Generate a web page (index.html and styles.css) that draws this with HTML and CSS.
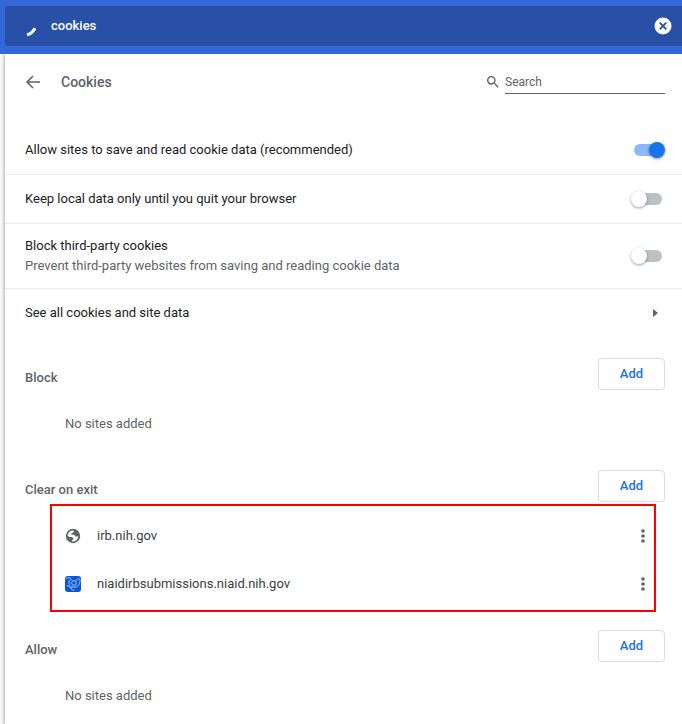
FILE: index.html
```html
<!DOCTYPE html>
<html lang="en">
<head>
<meta charset="utf-8">
<title>Settings - Cookies</title>
<link rel="stylesheet" href="styles.css">
</head>
<body>
<header class="toolbar">
  <form class="toolbar-search">
    <svg class="spinner" viewBox="0 0 12 12" aria-hidden="true"><path d="M2 9.800C5.400 9.200 8.200 6.400 10 3.200"/></svg>
    <input class="toolbar-input" type="text" value="cookies" aria-label="Search settings">
    <button class="clear" type="button" aria-label="Clear search">
      <svg viewBox="0 0 18 18"><circle cx="9" cy="9" r="8.500" fill="#fff"/><path d="M5.700 5.700l6.600 6.600M12.300 5.700l-6.600 6.600" stroke="#2850a7" stroke-width="1.800"/></svg>
    </button>
  </form>
</header>
<main class="panel">
  <div class="page-head">
    <button class="back" type="button" aria-label="Back">
      <svg viewBox="0 0 16 16"><path d="M15 8H2.500M8 2L2 8l6 6"/></svg>
    </button>
    <h1>Cookies</h1>
    <label class="find">
      <svg viewBox="0 0 24 24" aria-hidden="true"><path d="M15.500 14h-.790l-.280-.270A6.471 6.471 0 0 0 16 9.500 6.500 6.500 0 1 0 9.500 16c1.610 0 3.090-.590 4.230-1.570l.270.280v.790l5 4.990L20.490 19l-4.990-5zm-6 0C7.010 14 5 11.990 5 9.500S7.010 5 9.500 5 14 7.010 14 9.500 11.990 14 9.500 14z"/></svg>
      <input type="search" placeholder="Search" aria-label="Search cookies">
    </label>
  </div>

  <label class="row">
    <span>Allow sites to save and read cookie data (recommended)</span>
    <input class="toggle" type="checkbox" checked>
  </label>
  <label class="row">
    <span>Keep local data only until you quit your browser</span>
    <input class="toggle" type="checkbox">
  </label>
  <label class="row row-tall">
    <span>Block third-party cookies<span class="secondary">Prevent third-party websites from saving and reading cookie data</span></span>
    <input class="toggle" type="checkbox">
  </label>
  <a class="row" href="#site-data">
    <span>See all cookies and site data</span>
    <svg class="arrow" viewBox="0 0 5 8" aria-hidden="true"><path d="M0 0l5 4-5 4z"/></svg>
  </a>

  <section>
    <div class="section-head"><h2>Block</h2><button class="add" type="button">Add</button></div>
    <p class="empty">No sites added</p>
  </section>
  <section>
    <div class="section-head"><h2>Clear on exit</h2><button class="add" type="button">Add</button></div>
    <ul class="sites">
      <li>
        <svg class="favicon" viewBox="0 0 16 16" aria-hidden="true"><circle cx="8" cy="8" r="7.200" fill="#5f6368"/><path d="M8.800 2.500L8.500 4.200 6.600 5.300 6.200 6.800H9.400L10.300 8.600H12.200L13.400 8.300A5.500 5.500 0 0 1 7.200 13.400V11.900L8.800 10.900 7.200 9.100H4.500L2.500 7.800A5.600 5.600 0 0 1 8.800 2.500Z" fill="#fff"/></svg>
        <span>irb.nih.gov</span>
        <button class="more" type="button" aria-label="More actions for irb.nih.gov"><svg viewBox="0 0 4 14"><circle cx="2" cy="2" r="1.800"/><circle cx="2" cy="7" r="1.800"/><circle cx="2" cy="12" r="1.800"/></svg></button>
      </li>
      <li>
        <svg class="favicon" viewBox="0 0 16 16" aria-hidden="true"><rect width="16" height="16" rx="3" fill="#0756d9"/><g fill="none" stroke="#d5e4ff" stroke-width=".8"><path d="M.5 3C3 1 5.500 1.500 6.500 3.500M5.500 3.500C3.500 5 3.500 8 5 10"/><circle cx="9" cy="7" r="2.400"/><path d="M11.500 4.500c1-2.500 3.500-2.500 3.500 0s-1 6-4.500 6.500C7 11.500 4 11 1.500 9.500"/><path d="M6.500 11c-1.500 2 .5 3.500 3 3"/></g></svg>
        <span>niaidirbsubmissions.niaid.nih.gov</span>
        <button class="more" type="button" aria-label="More actions for niaidirbsubmissions.niaid.nih.gov"><svg viewBox="0 0 4 14"><circle cx="2" cy="2" r="1.800"/><circle cx="2" cy="7" r="1.800"/><circle cx="2" cy="12" r="1.800"/></svg></button>
      </li>
    </ul>
  </section>
  <section>
    <div class="section-head"><h2>Allow</h2><button class="add" type="button">Add</button></div>
    <p class="empty">No sites added</p>
  </section>
</main>
</body>
</html>
```
FILE: styles.css
```css
* { box-sizing: border-box; }
body {
  margin: 0;
  padding-left: 5px;
  background: #f8f9fa;
  color: #202124;
  font: 13px/20px Roboto, "Liberation Sans", sans-serif;
}
h1, h2, p, ul { margin: 0; padding: 0; }
button, input { font: inherit; color: inherit; }
button { padding: 0; border: 0; background: none; cursor: pointer; }
svg { display: block; flex: none; }

.toolbar { margin-left: -5px; padding: 6px 0 8px 5px; background: #3367d6; }
.toolbar-search {
  display: flex;
  align-items: center;
  height: 40px;
  padding: 0 10px 0 20px;
  border-radius: 2px 0 0 2px;
  background: #2850a7;
  color: #fff;
}
.spinner { width: 12px; height: 12px; margin: 10px 14px 0 0; fill: none; stroke: #fff; stroke-width: 3; }
.toolbar-input {
  flex: 1;
  min-width: 0;
  padding: 0;
  border: 0;
  outline: 0;
  background: none;
  font-weight: 500;
}
.clear svg { width: 18px; height: 18px; }

.panel {
  min-height: calc(100vh - 54px);
  background: #fff;
  box-shadow: 0 1px 3px 1px rgba(60, 64, 67, .4);
  clip-path: inset(0 0 0 -5px);
}
.page-head { display: flex; align-items: center; height: 56px; margin-bottom: 16px; padding: 0 17px 0 20px; }
.back svg { width: 16px; height: 16px; fill: none; stroke: #5f6368; stroke-width: 1.5; }
h1 { flex: 1; margin-left: 20px; color: #5f6368; font-size: 14px; font-weight: 500; }
.find { display: flex; align-items: center; gap: 4px; color: #5f6368; }
.find svg { width: 16px; height: 16px; fill: #5f6368; }
.find input {
  width: 160px;
  height: 24px;
  padding: 0;
  border: 0;
  border-bottom: 1px solid #5f6368;
  outline: 0;
  background: none;
  font-size: 12px;
}
.find input::placeholder { color: #5f6368; }

.row {
  display: flex;
  align-items: center;
  justify-content: space-between;
  min-height: 49px;
  padding: 0 17px 0 20px;
  border-bottom: 1px solid #ececec;
  color: inherit;
  text-decoration: none;
}
.row-tall { min-height: 65px; }
a.row { margin-bottom: 20px; border-bottom-color: transparent; }
.secondary { display: block; color: #5f6368; }
.arrow { width: 5px; height: 8px; margin-right: 7px; fill: #5f6368; }

.toggle {
  appearance: none;
  position: relative;
  width: 28px;
  height: 12px;
  margin: 0 3px;
  border-radius: 6px;
  background: #bdc1c6;
}
.toggle::before {
  content: "";
  position: absolute;
  top: -2px;
  left: -3px;
  width: 16px;
  height: 16px;
  border-radius: 50%;
  background: #fff;
  box-shadow: 0 1px 3px rgba(0, 0, 0, .4);
}
.toggle:checked { background: #8cb8f5; }
.toggle:checked::before { right: -3px; left: auto; background: #1a73e8; }

.section-head {
  display: flex;
  align-items: flex-end;
  justify-content: space-between;
  padding: 0 17px 0 20px;
  margin-top: 18px;
}
h2 { padding-bottom: 2px; color: #5f6368; font-size: 13px; font-weight: 500; }
.add {
  width: 67px;
  height: 32px;
  border: 1px solid #dadce0;
  border-radius: 4px;
  color: #1a73e8;
  font-weight: 500;
}
.empty { margin: 10px 0 22px; padding: 14px 60px; color: #5f6368; }

.sites {
  margin: 2px 26px 18px 45px;
  padding: 6px 9px 2px 13px;
  border: 2px solid #f00;
  list-style: none;
}
.sites li { display: flex; align-items: center; gap: 16px; height: 48px; color: #3c4043; }
.sites span { flex: 1; min-width: 0; }
.favicon { width: 16px; height: 16px; }
.more svg { width: 4px; height: 14px; fill: #5f6368; }
```
